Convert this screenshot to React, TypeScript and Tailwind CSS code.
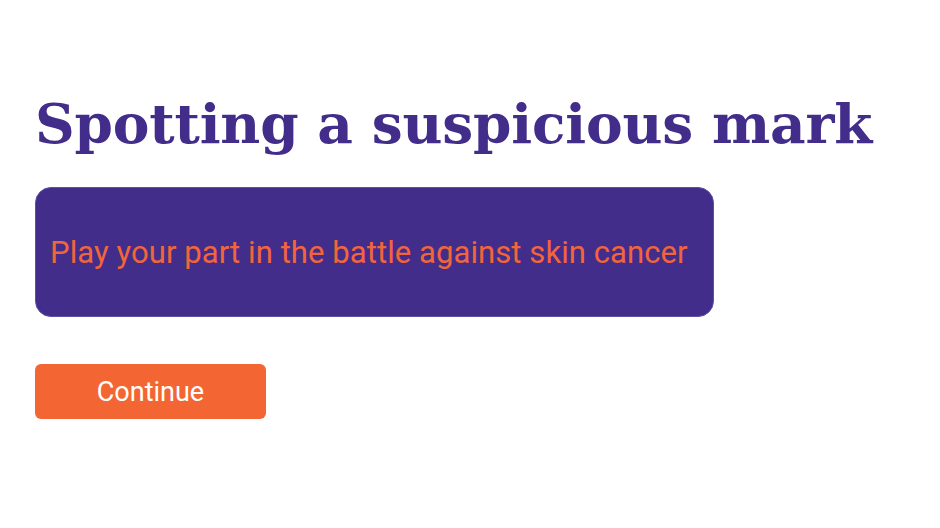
import React from "react";

export default function App() {
  return (
    <div className="w-[940px] h-[528px] bg-white pl-[35px] pt-[84px]">
      {/* Title */}
      <h1 className="font-['DejaVu_Serif',serif] font-bold text-[55px] leading-[80px] text-[#432d8a] tracking-[-0.2px] whitespace-nowrap">
        Spotting a suspicious mark
      </h1>

      {/* Tagline card */}
      <div className="mt-[23px] w-[679px] h-[130px] flex items-center px-[14px] pt-[3px] rounded-[16px] bg-[#432d8a] border border-[#5b4fa6]">
        <p className="font-['Roboto',sans-serif] text-[31px] tracking-[0.08px] text-[#f2653a] whitespace-nowrap">
          Play your part in the battle against skin cancer
        </p>
      </div>

      {/* Continue */}
      <button className="mt-[47px] w-[231px] h-[55px] pt-[2px] rounded-[6px] bg-[#f36633] text-white font-['Roboto',sans-serif] text-[27px] flex items-center justify-center">
        Continue
      </button>
    </div>
  );
}
